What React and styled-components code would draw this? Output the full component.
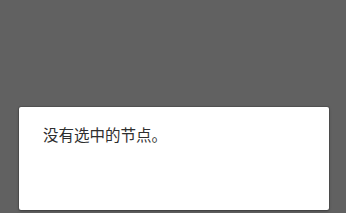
import React from 'react';
import styled, { createGlobalStyle } from 'styled-components';

const GlobalStyle = createGlobalStyle`
  html, body { margin: 0; padding: 0; background: #616161; }
  body { font-family: "Noto Sans CJK SC", "Noto Sans", sans-serif; }
`;

const Screen = styled.div`
  box-sizing: border-box;
  width: 346px;
  height: 213px;
  padding: 107px 17px 3px 19px;
  display: flex;
  flex-direction: column;
`;

const Panel = styled.div`
  flex: 1;
  background: #ffffff;
  border-radius: 2px;
  box-shadow: 0 0 0 1px rgba(0, 0, 0, 0.12), 0 1px 3px rgba(0, 0, 0, 0.3);
  padding: 15px 24px;
`;

const Message = styled.p`
  margin: 0;
  font-size: 15.5px;
  line-height: 24px;
  color: #2e2e2e;
`;

export default function App() {
  return (
    <>
      <GlobalStyle />
      <Screen>
        <Panel>
          <Message>没有选中的节点。</Message>
        </Panel>
      </Screen>
    </>
  );
}
